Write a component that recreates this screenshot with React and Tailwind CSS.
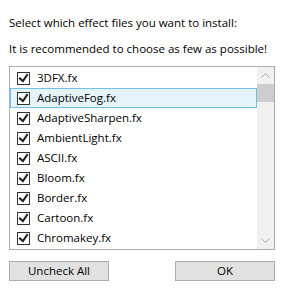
import React from "react";

const items = [
  "3DFX.fx",
  "AdaptiveFog.fx",
  "AdaptiveSharpen.fx",
  "AmbientLight.fx",
  "ASCII.fx",
  "Bloom.fx",
  "Border.fx",
  "Cartoon.fx",
  "Chromakey.fx",
];

function Check() {
  return (
    <div className="w-[13px] h-[13px] border border-[#333333] bg-white flex items-center justify-center shrink-0">
      <svg width="11" height="11" viewBox="0 0 11 11">
        <path
          d="M9.97498,1.22334L4.6983,9.09834L4.52164,9.09834L0,5.19331L1.27664,3.52165L4.255,6.08833L8.33331,0L9.97498,1.22334Z"
          fill="#212121"
          transform="translate(0.5 0.5)"
        />
      </svg>
    </div>
  );
}

export default function App() {
  return (
    <div
      className="w-[283px] h-[289px] bg-white text-black px-[9px] flex flex-col"
      style={{ fontFamily: '"Open Sans", "Noto Sans", sans-serif' }}
    >
      <p className="text-[11.5px] leading-[16px] mt-[15px] whitespace-nowrap shrink-0">
        Select which effect files you want to install:
      </p>
      <p className="text-[11.5px] leading-[16px] mt-[10px] whitespace-nowrap shrink-0">
        It is recommended to choose as few as possible!
      </p>
      <div className="mt-[9px] w-[266px] h-[184px] shrink-0 border border-[#abadb3] flex overflow-hidden">
        <div className="flex-1 py-[1px] overflow-hidden">
          {items.map((name, i) => (
            <div
              key={name}
              className={
                "h-[20px] flex items-center pl-[6px] border text-[11.5px] whitespace-nowrap " +
                (i === 1
                  ? "bg-[#e5f3fb] border-[#70c0e7]"
                  : "border-transparent")
              }
            >
              <Check />
              <span className="ml-[7px] leading-[16px]">{name}</span>
            </div>
          ))}
        </div>
        <div className="w-[17px] bg-[#f0f0f0] flex flex-col">
          <div className="h-[17px] flex items-center justify-center">
            <svg width="9" height="5" viewBox="0 0 9 5">
              <path d="M0.5 4.5 L4.5 0.5 L8.5 4.5" fill="none" stroke="#a8a8a8" strokeWidth="1" />
            </svg>
          </div>
          <div className="h-[18px] bg-[#cdcdcd]" />
          <div className="flex-1" />
          <div className="h-[17px] flex items-center justify-center">
            <svg width="9" height="5" viewBox="0 0 9 5">
              <path d="M0.5 0.5 L4.5 4.5 L8.5 0.5" fill="none" stroke="#a8a8a8" strokeWidth="1" />
            </svg>
          </div>
        </div>
      </div>
      <div className="mt-[11px] flex justify-between w-[266px] shrink-0">
        <button className="w-[100px] h-[20px] bg-[#e1e1e1] border border-[#adadad] text-[11.5px] leading-[16px] flex items-center justify-center whitespace-nowrap">
          Uncheck All
        </button>
        <button className="w-[100px] h-[20px] bg-[#e1e1e1] border border-[#adadad] text-[11.5px] leading-[16px] flex items-center justify-center whitespace-nowrap">
          OK
        </button>
      </div>
    </div>
  );
}
